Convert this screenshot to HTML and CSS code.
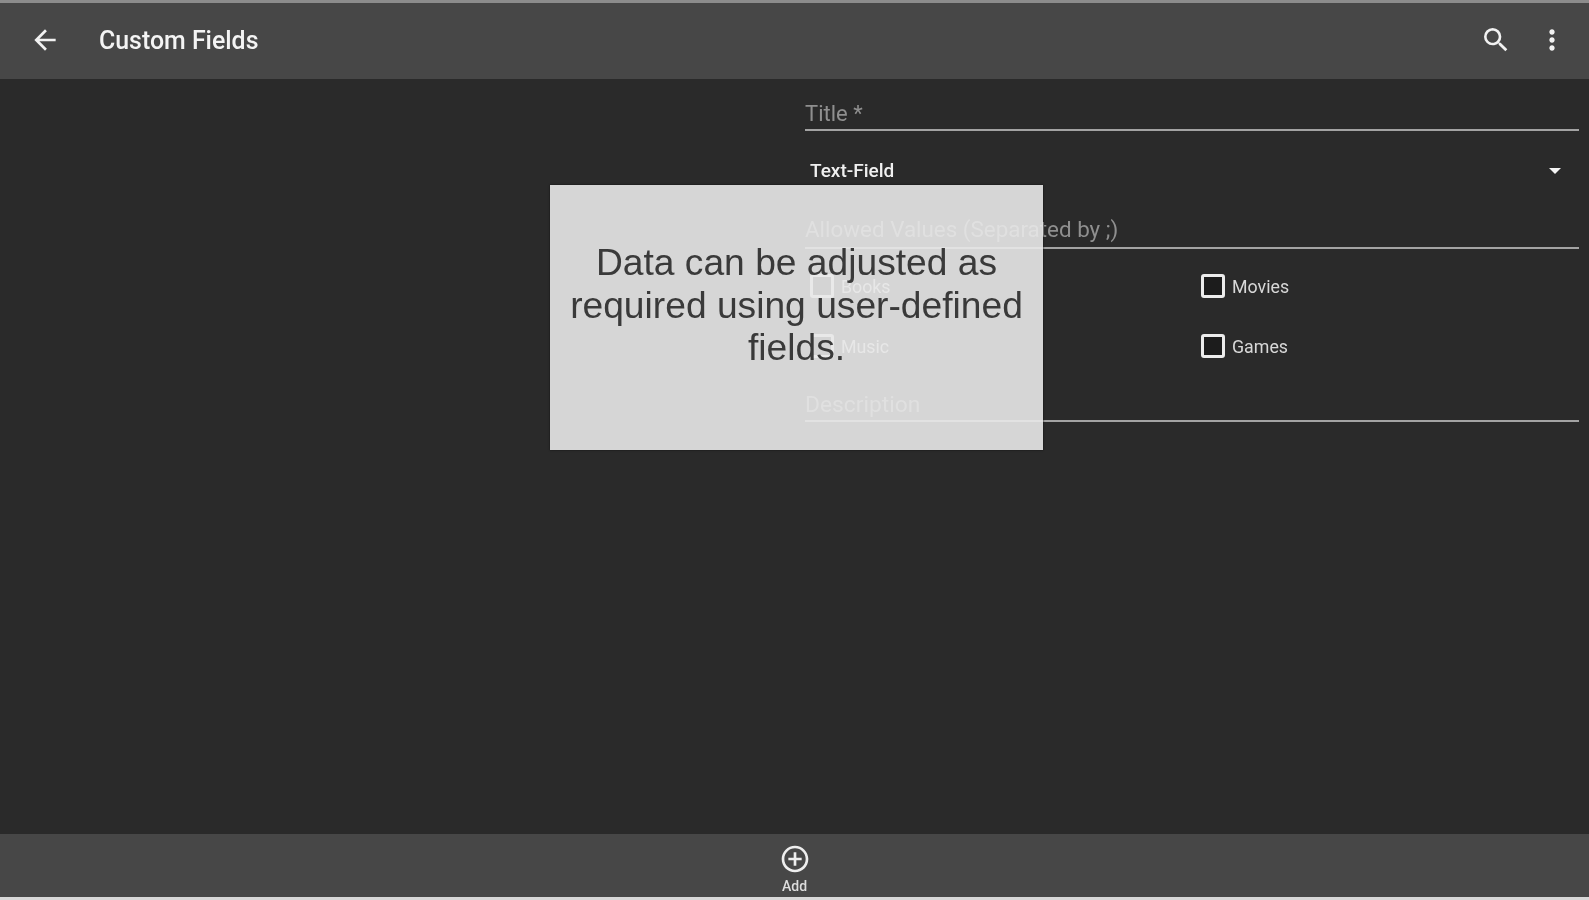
FILE: index.html
```html
<!DOCTYPE html>
<html lang="en">
<head>
<meta charset="utf-8">
<title>Custom Fields</title>
<link rel="stylesheet" href="styles.css">
</head>
<body>
<div class="app">
  <header class="toolbar">
    <svg class="icon back" viewBox="0 0 24 24"><path d="M20 11H7.83l5.59-5.59L12 4l-8 8 8 8 1.41-1.41L7.83 13H20z"/></svg>
    <h1 class="title">Custom Fields</h1>
    <svg class="icon search" viewBox="0 0 24 24"><path d="M15.5 14h-.79l-.28-.27A6.47 6.47 0 0 0 16 9.5 6.5 6.5 0 1 0 9.5 16c1.61 0 3.09-.59 4.23-1.57l.27.28v.79l5 4.99L20.49 19l-4.99-5zm-6 0C7.01 14 5 11.99 5 9.5S7.01 5 9.5 5 14 7.01 14 9.5 11.99 14 9.5 14z"/></svg>
    <svg class="icon more" viewBox="0 0 24 24"><path d="M12 8c1.1 0 2-.9 2-2s-.9-2-2-2-2 .9-2 2 .9 2 2 2zm0 2c-1.100 0-2 .9-2 2s.9 2 2 2 2-.9 2-2-.9-2-2-2zm0 6c-1.100 0-2 .9-2 2s.9 2 2 2 2-.9 2-2-.9-2-2-2z"/></svg>
  </header>
  <main class="content">
    <form class="form">
      <div class="field"><span class="placeholder">Title *</span></div>
      <div class="select"><span>Text-Field</span><i class="caret"></i></div>
      <div class="field allowed"><span class="placeholder">Allowed Values (Separated by ;)</span></div>
      <div class="checks">
        <label class="check"><i class="box"></i>Books</label>
        <label class="check"><i class="box"></i>Movies</label>
        <label class="check"><i class="box"></i>Music</label>
        <label class="check"><i class="box"></i>Games</label>
      </div>
      <div class="field description"><span class="placeholder">Description</span></div>
    </form>
  </main>
  <footer class="bottombar">
    <svg class="add-icon" viewBox="0 0 24 24"><path d="M13 7h-2v4H7v2h4v4h2v-4h4v-2h-4V7zm-1-5C6.480 2 2 6.480 2 12s4.480 10 10 10 10-4.480 10-10S17.520 2 12 2zm0 18c-4.410 0-8-3.590-8-8s3.590-8 8-8 8 3.590 8 8-3.590 8-8 8z"/></svg>
    <span class="add-label">Add</span>
  </footer>
  <div class="hint">Data can be adjusted as required using user-defined fields.</div>
</div>
</body>
</html>
```

FILE: styles.css
```css
* { box-sizing: border-box; }
html, body { margin: 0; height: 100%; overflow: hidden; background: #2a2a2a; }
.app {
  position: relative;
  height: 900px;
  display: flex;
  flex-direction: column;
  font-family: Roboto, "Liberation Sans", sans-serif;
  color: #fff;
  border-top: 3px solid #8c8c8c;
  border-bottom: 3px solid #d8d8d8;
  background: #2a2a2a;
}
.toolbar {
  height: 76px;
  flex: none;
  display: flex;
  align-items: center;
  padding: 0 21px 2px 29px;
  background: #474747;
  filter: blur(.7px);
}
.icon { width: 32px; height: 32px; fill: #f2f2f2; flex: none; }
.title {
  margin: 2px 0 0 38px;
  flex: 1;
  font-size: 24.900px;
  font-weight: 500;
  line-height: 28px;
  color: #f4f4f4;
}
.search { margin-right: 24px; }
.content {
  flex: 1;
  display: flex;
  justify-content: flex-end;
  padding: 19px 10px 0 0;
  filter: blur(.7px);
}
.form { width: 774px; }
.field {
  height: 33px;
  border-bottom: 2px solid #a3a3a3;
  font-size: 22px;
  line-height: 32px;
}
.placeholder { color: #8f8f8f; }
.select {
  height: 80px;
  padding: 27px 18px 0 5px;
  display: flex;
  justify-content: space-between;
  font-size: 19px;
  font-weight: 500;
  line-height: 25px;
  color: #f0f0f0;
}
.caret {
  margin-top: 10px;
  width: 0;
  height: 0;
  border: 6px solid transparent;
  border-top-color: #f4f4f4;
  border-bottom-width: 0;
}
.allowed { margin-top: 3px; height: 35px; font-size: 22.400px; line-height: 31px; }
.checks {
  display: grid;
  grid-template-columns: 391px 1fr;
  grid-auto-rows: 60px;
  padding: 19px 0 0 5px;
}
.check {
  display: flex;
  align-items: center;
  height: 36px;
  font-size: 17.800px;
  color: #d8d8d8;
}
.box {
  width: 24px;
  height: 24px;
  margin-right: 7px;
  border: 3px solid #ececec;
  border-radius: 3px;
  background: #1c1c1c;
}
.description { margin-top: 1px; height: 33px; font-size: 22.800px; line-height: 32px; }
.bottombar {
  height: 63px;
  flex: none;
  display: flex;
  flex-direction: column;
  align-items: center;
  padding-top: 9px;
  background: #474747;
  filter: blur(.7px);
}
.add-icon { width: 32px; height: 32px; fill: #eee; }
.add-label { margin-top: 4px; font-size: 14px; font-weight: 500; line-height: 15px; color: #ddd; }
.hint {
  position: absolute;
  left: 550px;
  top: 182px;
  width: 493px;
  height: 265px;
  padding: 56px 10px 0;
  text-align: center;
  font-family: "Liberation Sans", Arial, sans-serif;
  font-size: 37.200px;
  line-height: 42.500px;
  color: #3a3a3a;
  background: rgba(233, 233, 233, .9);
  box-shadow: 0 0 2px #111;
  filter: blur(.4px);
}
```
